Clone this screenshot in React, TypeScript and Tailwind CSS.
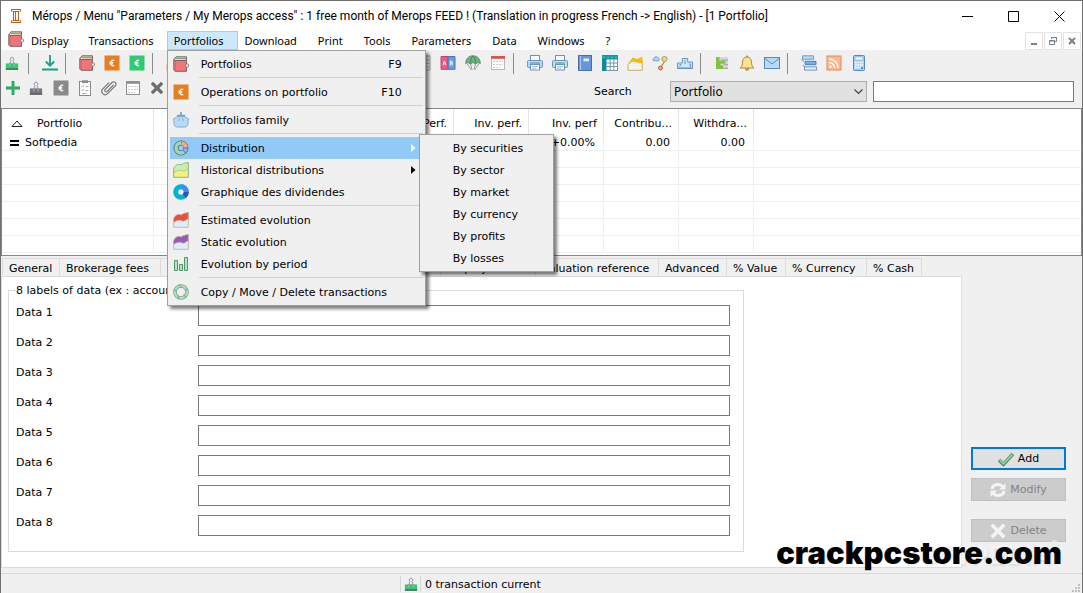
import type { ReactNode } from 'react';

type IconProps = { className?: string; children: ReactNode };

function Svg({ className = 'size-4', children }: IconProps) {
  return (
    <svg viewBox="0 0 16 16" className={`${className} shrink-0`} fill="none" aria-hidden="true">
      {children}
    </svg>
  );
}

/* ---------- icons ---------- */

function ColumnIcon() {
  return (
    <Svg>
      <path d="M3 1.500h10M3 14.500h10M4.500 3.500h7M4.500 12.500h7" stroke="#b5651d" />
      <path d="M3.500 1v2.500M12.500 1v2.500M3.500 12.500V15M12.500 12.500V15" stroke="#b5651d" />
      <path d="M5.500 4v8M7.500 4v8M10.500 4v8" stroke="#b5651d" />
    </Svg>
  );
}

function WalletIcon() {
  return (
    <Svg>
      <path d="M1 3.500 3 .8h10.500V4" fill="#d9cfa8" stroke="#6f6a66" />
      <path d="M3 2.500h10" stroke="#7fa887" />
      <path d="M.8 3.500 2 4.500h11.500v10.800H2L.8 14Z" fill="#f27478" stroke="#7d6365" />
      <path d="M2.500 5v10" stroke="#e0666b" />
      <rect x="12.500" y="8" width="3" height="3" rx="1" fill="#e9edf0" stroke="#74777a" strokeWidth=".8" />
    </Svg>
  );
}

function EuroIcon({ color }: { color: string }) {
  return (
    <Svg>
      <rect x=".5" y=".5" width="15" height="15" fill={color} />
      <path d="M10.300 5.500C8.400 4.500 6.800 5.500 6.800 8s1.600 3.500 3.500 2.500M5.500 7.300h3.700M5.500 8.800h3.700" stroke="#fff" strokeWidth="1.200" />
    </Svg>
  );
}

function ClipIcon({ color }: { color: string }) {
  return (
    <Svg className="size-3.5">
      <path d="M1 8.500h14V15H1Z" fill={color} />
      <path d="M1 15h14" stroke="#4f5a55" strokeWidth="1.600" />
      <path d="M5.500 9 6.800 5a2 2 0 1 1 2.400 0L10.500 9" fill="#f0f0f0" stroke="#8f94a8" strokeWidth="1.100" />
      <path d="M4.500 8.500h7" stroke="#8f94a8" />
      <path d="M5.500 9v3M10.500 9v3" stroke="#b9bdc9" />
    </Svg>
  );
}

function DownloadIcon() {
  return (
    <Svg>
      <path d="M8 0v10M3.800 6.500 8 10.700l4.200-4.200" stroke="#16a085" strokeWidth="1.800" />
      <path d="M0 14.500h16" stroke="#16a085" strokeWidth="2" />
    </Svg>
  );
}

function PlusIcon() {
  return (
    <Svg>
      <path d="M8 1v14M1 8h14" stroke="#1f9d55" strokeWidth="2.800" />
      <path d="M8 2v12M2 8h12" stroke="#38c172" strokeWidth="1" />
    </Svg>
  );
}

function ClipboardIcon() {
  return (
    <Svg>
      <rect x="2.500" y="1.500" width="11" height="14" fill="#fff" stroke="#8a8a8a" />
      <rect x="5" y=".3" width="6" height="2.800" fill="#8a8a8a" />
      <path d="m4.500 6 1 1 1.500-2M4.500 10l1 1 1.500-2M8.500 6.500h3M8.500 10.500h3M5 13.500h4" stroke="#999" strokeWidth=".8" />
    </Svg>
  );
}

function PaperclipIcon() {
  return (
    <Svg>
      <path
        d="m12.500 5-6.300 6.300a1.400 1.400 0 0 1-2-2L11 2.500a2.300 2.300 0 0 1 3.300 3.300l-7.800 7.800a3.300 3.300 0 0 1-4.700-4.700L8 2.700"
        stroke="#777"
        strokeWidth="1.200"
      />
    </Svg>
  );
}

function SheetIcon({ head, frame }: { head: string; frame: string }) {
  return (
    <Svg>
      <rect x="1.500" y="1.500" width="13" height="13" fill="#fff" stroke={frame} />
      <rect x="1" y="1" width="14" height="2.800" fill={head} />
      <path d="M3 6.500h10M3 9.500h10M3 12.500h7" stroke="#ccc" strokeDasharray="2 1" />
    </Svg>
  );
}

function CrossIcon({ color }: { color: string }) {
  return (
    <Svg>
      <path d="m4 4 8 8M12 4l-8 8" stroke={color} strokeWidth="3.200" strokeLinecap="square" />
    </Svg>
  );
}

function GridIcon() {
  return (
    <Svg>
      <rect x="1" y="1" width="14" height="14" fill="#eee" stroke="#aaa" />
      <path d="M1 5h14M1 8.500h14M1 12h14M5.500 1v14M10.500 1v14" stroke="#b5b5b5" />
    </Svg>
  );
}

function AbIcon() {
  return (
    <Svg>
      <path d="M1 1.500h7v12.800H1Z" fill="#ef5a84" stroke="#b54a6c" />
      <path d="M8 1.500h7v12.800H8Z" fill="#6d9be0" stroke="#4b74b4" />
      <path d="m3 10 1.500-4L6 10M3.500 8.800h2M10.200 6v4h1.500a1 1 0 0 0 0-2h-1.500 1.200a1 1 0 0 0 0-2Z" stroke="#fff" strokeWidth=".8" />
    </Svg>
  );
}

function ParachuteIcon() {
  return (
    <Svg>
      <path d="M2 8.500 6.500 15M5.500 8.500 7 15M10.500 8.500 9 15M14 8.500 9.500 15" stroke="#999" strokeWidth=".9" />
      <path d="M.7 8.500C.7 3.500 4 .7 8 .7s7.300 2.800 7.300 7.800L13 7.500 10.500 9 8 7.500 5.500 9 3 7.500Z" fill="#6bb383" stroke="#4d8b63" strokeWidth=".8" />
      <path d="M5.500 8.500C5.500 5 6.500 2 8 1c1.500 1 2.500 4 2.500 7.500" stroke="#467c58" strokeWidth=".8" />
    </Svg>
  );
}

function PrinterIcon({ tray }: { tray: string }) {
  return (
    <Svg>
      <rect x="3.500" y=".5" width="9" height="6" fill="#f4faff" stroke="#6c93bd" />
      <rect x=".5" y="5.500" width="15" height="7" rx="1" fill={tray} stroke="#6c93bd" />
      <path d="M3 8h10" stroke="#5d84ad" />
      <rect x="3.500" y="9.500" width="9" height="5.500" fill="#fff" stroke="#6c93bd" />
      <path d="M5 11.500h6M5 13.200h4" stroke="#8cb4dc" strokeWidth=".8" />
    </Svg>
  );
}

function BookIcon() {
  return (
    <Svg>
      <rect x="1.500" y=".5" width="13" height="15" fill="#6496dc" stroke="#4a6fa8" />
      <path d="M3.500 1v14" stroke="#a9c8ef" />
      <rect x="6.500" y="3.500" width="5.500" height="2.800" fill="#e3effd" />
    </Svg>
  );
}

function TealTableIcon() {
  return (
    <Svg>
      <rect x=".5" y=".5" width="15" height="15" fill="#fff" />
      <path d="M0 0h16v4.500H0Z" fill="#0b9aa3" />
      <path d="M0 4h4.500v12H0Z" fill="#0f8a9b" />
      <path d="M4 8h12M4 11.500h12M8.200 4v12M11.800 4v12M4 15.500h12M15.500 4v12" stroke="#7896a8" />
      <path d="M1 2.200h14" stroke="#4fd0d4" strokeDasharray="2 2" />
    </Svg>
  );
}

function AreaIcon({ top, bottom, line }: { top: string; bottom: string; line: string }) {
  return (
    <Svg>
      <path d="M.7 15.300V6.500C2 4 4 2 6 2.500c2.500.8 3 .2 4.500-1l4.800-1v14.800Z" fill={bottom} stroke={line} strokeWidth="1" />
      <path d="M.7 10.500v-4C2 4 4 2 6 2.500c2.500.8 3 .2 4.500-1l4.800-1V7C13 7 12 10 9.500 9 6 7.500 4 8.500.7 10.500Z" fill={top} stroke={line} strokeWidth=".6" />
    </Svg>
  );
}

function YieldIcon() {
  return (
    <Svg>
      <path d="M1 15.300V9.500L5 6h10.300v9.300Z" fill="#edf4fa" stroke="#d9a860" />
      <path d="M.5 9.500 5.500 2.500 10 4l5.500-2.500v7L10 7.500 5 6.500Z" fill="#f7bb0c" />
    </Svg>
  );
}

function NodesIcon() {
  return (
    <Svg>
      <path d="M12.500 6.500 9 12" stroke="#b08a5a" strokeWidth="1.300" />
      <path d="M1.500 5.700a1.600 1.600 0 0 1 .6-2.600 2.300 2.300 0 0 1 4.300.3 1.200 1.200 0 0 1 .3 2.300Z" fill="#b5dbfa" stroke="#6a9cc5" />
      <circle cx="12.500" cy="4" r="2.600" fill="#efd58c" stroke="#b99b57" />
      <circle cx="8.500" cy="13" r="2" fill="#f0a283" stroke="#b5674a" />
    </Svg>
  );
}

function PodiumIcon() {
  return (
    <Svg>
      <path d="M.5 13.500V8h4.800V3.500h5.400V7h4.800v6.500Z" fill="#cfe6fa" stroke="#6795c0" />
      <path d="M8 5v4M2.500 9.500h1.500l-1.500 2M12 9h1.500v3M1 13h14" stroke="#6795c0" />
    </Svg>
  );
}

function GanttIcon() {
  return (
    <Svg>
      <path d="M2 2h12v12H2Z" fill="#d5d8d8" />
      <path d="M7 4.500h7v1.200H7ZM10 9h4v1.200h-4ZM8 12.800h6V14H8Z" fill="#a4aaaa" />
      <path d="M2 2h3.500v3.500h6v3.200H6.500v1.500h2.500V14H2Z" fill="#84c341" />
    </Svg>
  );
}

function BellIcon() {
  return (
    <Svg>
      <circle cx="8" cy="13.800" r="1.600" fill="#e3b04b" stroke="#a88236" strokeWidth=".8" />
      <path d="M1 13c2-1.500 2.300-3 2.500-6C3.700 4 5 2.300 8 1.800c3 .5 4.300 2.200 4.500 5.200.2 3 .5 4.500 2.500 6Z" fill="#fbe38e" stroke="#b08a3c" />
      <circle cx="8" cy="1.300" r=".9" fill="#b08a3c" />
    </Svg>
  );
}

function MailIcon() {
  return (
    <Svg>
      <rect x=".5" y="2.500" width="15" height="11" fill="#b5dbfa" stroke="#5f88b3" />
      <path d="m1 3.500 7 5.500 7-5.500" stroke="#5f88b3" />
    </Svg>
  );
}

function ListIcon() {
  return (
    <Svg>
      <path d="M1.500.8h11v3.400h-11Z" fill="#b9dcf8" stroke="#5d86ac" strokeWidth=".8" />
      <path d="M4 6.300h11v3.400H4Z" fill="#6eb0f2" stroke="#3f6fa5" strokeWidth=".8" />
      <path d="M3.500 11.800h12v3.400h-12Z" fill="#d6ecfc" stroke="#5d86ac" strokeWidth=".8" />
      <path d="M.5 4.500 3 6.500M2 10l1.500 2" stroke="#5d86ac" />
    </Svg>
  );
}

function FeedIcon() {
  return (
    <Svg>
      <rect x="1" y="1" width="14" height="14" fill="#fbb98d" stroke="#dd8e62" />
      <circle cx="4.500" cy="11.800" r="1.300" fill="#fff" />
      <path d="M3.200 7.500a5.300 5.300 0 0 1 5.300 5.300M3.200 4a8.800 8.800 0 0 1 8.800 8.800" stroke="#fff" strokeWidth="1.400" />
    </Svg>
  );
}

function CalculatorIcon() {
  return (
    <Svg>
      <rect x="2.500" y=".5" width="11" height="15" rx="1" fill="#a8d2fa" stroke="#5688bd" />
      <rect x="4" y="2" width="8" height="3" fill="#f3faff" stroke="#78a5d0" strokeWidth=".6" />
      <path d="M4 7.500h8M4 10h8M4 12.500h8" stroke="#fff" strokeWidth="1.400" strokeDasharray="1.600 .8" />
      <path d="M11 12v2" stroke="#2f74c0" strokeWidth="1.500" />
    </Svg>
  );
}

function PurseIcon() {
  return (
    <Svg>
      <path d="M8 0v3M4 3.500h8" stroke="#7d9dba" strokeWidth="1.600" />
      <path d="M4 4.500h8c0 1.500 3 1 3.500 2.500.3 1.500-1 1.500-.5 3 .5 2-.8 5-2.500 5h-9C1.800 15 .5 12 1 10c.5-1.500-.8-1.500-.5-3C1 5.500 4 6 4 4.500Z" fill="#b5dbfa" stroke="#7aa2c6" strokeWidth=".9" />
      <path d="M6.500 6 5.500 9M9.500 6l1 3" stroke="#7aa2c6" strokeWidth=".8" />
    </Svg>
  );
}

function DonutIcon() {
  return (
    <Svg>
      <circle cx="8" cy="8" r="5" stroke="#4e7d62" strokeWidth="5" />
      <circle cx="8" cy="8" r="5" stroke="#a3d6b4" strokeWidth="3.400" />
      <path d="M8 3a5 5 0 0 1 5 5" stroke="#c47a55" strokeWidth="5" />
      <path d="M8.800 3.100A5 5 0 0 1 12.900 7.200" stroke="#f5a985" strokeWidth="3.400" />
      <path d="M13 8a5 5 0 0 1-2 4" stroke="#5f86c8" strokeWidth="4.600" />
      <path d="M12.900 8.800a5 5 0 0 1-1.300 2.500" stroke="#8fb5ee" strokeWidth="3" />
    </Svg>
  );
}

function DividendIcon() {
  return (
    <Svg>
      <circle cx="8" cy="8" r="5.300" stroke="#00b5d0" strokeWidth="5" />
      <path d="M8 2.700A5.300 5.300 0 0 1 13.300 8" stroke="#3f8cff" strokeWidth="5" />
      <path d="M13.300 8a5.300 5.300 0 0 1-2 4" stroke="#3a4db5" strokeWidth="5" />
    </Svg>
  );
}

function BarsIcon() {
  return (
    <Svg>
      <path d="M1.500 4.500h3v10h-3ZM6.500 8.500h3v6h-3ZM11.500 1.500h3v13h-3Z" fill="#b8e0c4" stroke="#4c9a68" />
    </Svg>
  );
}

function RingIcon() {
  return (
    <Svg>
      <circle cx="8" cy="8" r="6" stroke="#6fa583" strokeWidth="3.600" />
      <circle cx="8" cy="8" r="6" stroke="#b5dcc1" strokeWidth="2.200" />
      <path d="m1 6 3 1M6 .8l2.500 2.500M14 4.500 12.500 7M13 13l-2.500-2M5 15l.5-3" stroke="#6fa583" />
    </Svg>
  );
}

function CheckIcon() {
  return (
    <Svg>
      <path d="m1 9 4.500 4.300L15 3" stroke="#4b8a62" strokeWidth="3.600" />
      <path d="m1.500 9 4 3.700L14.500 3.500" stroke="#8fcba4" strokeWidth="2" />
    </Svg>
  );
}

function RefreshIcon() {
  return (
    <Svg>
      <path d="M2 7C2.500 4 5 2.500 8 2.500c2 0 3.500.8 4.500 2M14 9c-.5 3-3 4.500-6 4.500-2 0-3.500-.8-4.500-2" stroke="#f4f4f4" strokeWidth="3" />
      <path d="M15.500 1v6.500H9ZM.5 15V8.500H7Z" fill="#f4f4f4" />
    </Svg>
  );
}

function DeleteIcon() {
  return (
    <Svg>
      <path d="m3 3 10 10M13 3 3 13" stroke="#f4f4f4" strokeWidth="3.600" strokeLinecap="square" />
    </Svg>
  );
}

/* ---------- window frame ---------- */

function TitleBar() {
  return (
    <header className="flex h-[30px] items-center bg-white pl-[7px]">
      <ColumnIcon />
      <h1 className="ml-2 font-['Roboto','Noto_Sans',sans-serif] text-[12px] whitespace-nowrap">
        Mérops / Menu "Parameters / My Merops access" : 1 free month of Merops FEED ! (Translation in progress French -&gt; English) - [1 Portfolio]
      </h1>
      <div className="ml-auto flex h-full">
        <button aria-label="Minimize" className="flex w-[46px] items-center justify-center">
          <svg width="11" height="11" className="block"><path d="M0 5.500h11" stroke="#000" /></svg>
        </button>
        <button aria-label="Maximize" className="flex w-[46px] items-center justify-center">
          <svg width="11" height="11" className="block"><path d="M.5.5h10v10H.5Z" fill="none" stroke="#000" /></svg>
        </button>
        <button aria-label="Close" className="flex w-[46px] items-center justify-center">
          <svg width="11" height="11" className="block"><path d="m.5.5 10 10M10.500.5l-10 10" stroke="#000" /></svg>
        </button>
      </div>
    </header>
  );
}

const leftMenus = ['Display', 'Transactions'];
const rightMenus = ['Download', 'Print', 'Tools', 'Parameters', 'Data', 'Windows', '?'];

function MenuBar() {
  return (
    <nav className="flex h-[19px] bg-white pr-px pl-[7px] font-['Noto_Sans','Open_Sans',sans-serif] text-[11px]">
      <WalletIcon />
      {leftMenus.map((name) => (
        <button key={name} className="h-[19px] pr-[13px] pl-[7px] leading-[19px]">{name}</button>
      ))}
      <div className="relative">
        <button className="h-[19px] border border-[#99d1ff] bg-[#cce8ff] pr-[13px] pl-[6px] leading-[17px]">Portfolios</button>
        <PortfoliosMenu />
      </div>
      {rightMenus.map((name) => (
        <button key={name} className="h-[19px] pr-[14px] pl-[7px] leading-[19px]">{name}</button>
      ))}
      <div className="ml-auto flex gap-px pt-px">
        <button aria-label="Minimize child" className="flex h-[18px] w-[18px] items-center justify-center border border-[#e3e3e3]">
          <svg width="10" height="10"><path d="M2 8h6" stroke="#76838f" strokeWidth="2" /></svg>
        </button>
        <button aria-label="Restore child" className="flex h-[18px] w-[18px] items-center justify-center border border-[#e3e3e3]">
          <svg width="10" height="10" fill="none" stroke="#76838f">
            <path d="M3.500 3V1.500h5v4H7M3 1.500h6M1.500 4.500h5v4h-5ZM1 5h6" />
          </svg>
        </button>
        <button aria-label="Close child" className="flex h-[18px] w-[18px] items-center justify-center border border-[#e3e3e3]">
          <svg width="10" height="10"><path d="m2 2 6 6M8 2 2 8" stroke="#76838f" strokeWidth="2" /></svg>
        </button>
      </div>
    </nav>
  );
}

/* ---------- drop-down menu ---------- */

type Entry = { label: string; icon: ReactNode; shortcut?: string; sub?: boolean; active?: boolean };

const groups: Entry[][] = [
  [{ label: 'Portfolios', icon: <WalletIcon />, shortcut: 'F9' }],
  [{ label: 'Operations on portfolio', icon: <EuroIcon color="#e67e22" />, shortcut: 'F10' }],
  [{ label: 'Portfolios family', icon: <PurseIcon /> }],
  [
    { label: 'Distribution', icon: <DonutIcon />, sub: true, active: true },
    { label: 'Historical distributions', icon: <AreaIcon top="#c9eeb0" bottom="#f4f07c" line="#8db586" />, sub: true },
    { label: 'Graphique des dividendes', icon: <DividendIcon /> },
  ],
  [
    { label: 'Estimated evolution', icon: <AreaIcon top="#e8503a" bottom="#dceefa" line="#c9b9a4" /> },
    { label: 'Static evolution', icon: <AreaIcon top="#9b59b6" bottom="#dceefa" line="#c9b9a4" /> },
    { label: 'Evolution by period', icon: <BarsIcon /> },
  ],
  [{ label: 'Copy / Move / Delete transactions', icon: <RingIcon /> }],
];

const distributions = ['By securities', 'By sector', 'By market', 'By currency', 'By profits', 'By losses'];

function PortfoliosMenu() {
  return (
    <div className="absolute top-[19px] left-0 z-10 w-[259px] border border-[#a0a0a0] bg-[#f0f0f0] p-[2px] font-['DejaVu_Sans',Verdana,sans-serif] text-[11px] shadow-[3px_3px_3px_rgba(0,0,0,0.5)]">
      {groups.map((group, i) => (
        <div key={i}>
          {i > 0 && <div className="ml-[29px] h-[6px] pt-[2px]"><div className="h-px bg-[#d0d0d0]" /></div>}
          {group.map((entry) => (
            <button
              key={entry.label}
              className={`flex h-[22px] w-full items-center pl-[3px] text-left ${entry.active ? 'bg-[#91c9f7]' : ''}`}
            >
              {entry.icon}
              <span className="ml-3 pt-[2px] whitespace-nowrap">{entry.label}</span>
              {entry.shortcut && <span className="mr-[21px] ml-auto pt-[2px]">{entry.shortcut}</span>}
              {entry.sub && (
                <svg width="5" height="8" className="mr-[7px] ml-auto">
                  <path d="M0 0 4.500 4 0 8Z" fill={entry.active ? '#fff' : '#000'} />
                </svg>
              )}
            </button>
          ))}
        </div>
      ))}
      <div className="absolute top-[83px] left-[251px] w-[135px] border border-[#a0a0a0] bg-[#f0f0f0] p-[2px] shadow-[3px_3px_3px_rgba(0,0,0,0.5)]">
        {distributions.map((label) => (
          <button key={label} className="block h-[22px] w-full pt-[2px] pl-[31px] text-left">{label}</button>
        ))}
      </div>
    </div>
  );
}

/* ---------- toolbar ---------- */

function Tool({ name, children }: { name: string; children: ReactNode }) {
  return (
    <button aria-label={name} className="flex h-[25px] w-[25px] shrink-0 items-center pl-1">
      {children}
    </button>
  );
}

function Separator() {
  return <div className="h-[21px] w-3 shrink-0 pl-[2px]"><div className="h-full w-px bg-[#8a8a8a]" /></div>;
}

function Toolbar() {
  return (
    <div className="h-[58px]">
      <div className="flex h-[26px] items-center">
        <Tool name="Transaction"><ClipIcon color="#2ecc71" /></Tool>
        <Separator />
        <Tool name="Download"><DownloadIcon /></Tool>
        <Separator />
        <Tool name="Portfolios"><WalletIcon /></Tool>
        <Tool name="Operations"><EuroIcon color="#e67e22" /></Tool>
        <Tool name="Cash"><EuroIcon color="#2ecc71" /></Tool>
        <Separator />
        <Tool name="Securities"><YieldIcon /></Tool>
        <div className="w-[224px] shrink-0" />
        <Tool name="Grid"><GridIcon /></Tool>
        <Tool name="Compare"><AbIcon /></Tool>
        <Tool name="Parachute"><ParachuteIcon /></Tool>
        <Tool name="Calendar"><SheetIcon head="#d9534f" frame="#b9b9b9" /></Tool>
        <Separator />
        <Tool name="Print"><PrinterIcon tray="#b5d8fa" /></Tool>
        <Tool name="Print list"><PrinterIcon tray="#bfe8cb" /></Tool>
        <Tool name="Book"><BookIcon /></Tool>
        <Tool name="Table"><TealTableIcon /></Tool>
        <Tool name="Chart"><YieldIcon /></Tool>
        <Tool name="Links"><NodesIcon /></Tool>
        <Tool name="Ranking"><PodiumIcon /></Tool>
        <Separator />
        <Tool name="Planning"><GanttIcon /></Tool>
        <Tool name="Alerts"><BellIcon /></Tool>
        <Tool name="Mail"><MailIcon /></Tool>
        <Separator />
        <Tool name="List"><ListIcon /></Tool>
        <Tool name="Feed"><FeedIcon /></Tool>
        <Tool name="Calculator"><CalculatorIcon /></Tool>
      </div>
      <div className="flex items-start">
        <div className="flex h-6 [&>button]:h-6 [&>button]:w-6">
          <Tool name="New"><PlusIcon /></Tool>
          <Tool name="Clip"><ClipIcon color="#777" /></Tool>
          <Tool name="Euro"><EuroIcon color="#8a8a8a" /></Tool>
          <Tool name="Clipboard"><ClipboardIcon /></Tool>
          <Tool name="Attachment"><PaperclipIcon /></Tool>
          <Tool name="Window"><SheetIcon head="#8f8f8f" frame="#8f8f8f" /></Tool>
          <Tool name="Remove"><CrossIcon color="#6e6e6e" /></Tool>
        </div>
        <div className="mt-[5px] mr-2 ml-auto flex items-center">
          <label htmlFor="search-field" className="w-[76px] pt-px">Search</label>
          <div className="relative mr-[6px]">
            <select
              id="search-field"
              className="h-[21px] w-[197px] appearance-none border border-[#adadad] bg-[#e1e1e1] pl-[3px] font-['Noto_Sans',sans-serif] text-[12px] leading-[18px]"
            >
              <option>Portfolio</option>
            </select>
            <svg width="9" height="6" className="pointer-events-none absolute top-2 right-1">
              <path d="m.5.5 4 4 4-4" fill="none" stroke="#444" strokeWidth="1.200" />
            </svg>
          </div>
          <input aria-label="Search text" className="h-[21px] w-[201px] border border-[#7a7a7a] bg-white px-1" />
        </div>
      </div>
    </div>
  );
}

/* ---------- portfolio list ---------- */

function PortfolioTable() {
  return (
    <section className="border border-[#828790] bg-white pb-[2px]">
      <table className="w-full table-fixed border-separate border-spacing-0 text-right [&_td]:border-r [&_td]:border-b [&_td]:border-[#f0f0f0] [&_td]:p-0 [&_th]:border-r [&_th]:border-[#e5e5e5] [&_th]:p-0 [&_th]:pt-1 [&_th]:font-normal">
        <colgroup>
          <col className="w-[152px]" />
          <col className="w-[75px]" />
          <col className="w-[75px]" />
          <col className="w-[75px]" />
          <col className="w-[75px]" />
          <col className="w-[75px]" />
          <col className="w-[75px]" />
          <col className="w-[75px]" />
          <col className="w-[75px]" />
          <col />
        </colgroup>
        <thead>
          <tr className="h-[25px] leading-4">
            <th>
              <span className="flex items-center gap-[14px] pl-[9px]">
                <svg width="12" height="7"><path d="M1 6.500 6 1l5 5.500Z" fill="none" stroke="#222" /></svg>
                Portfolio
              </span>
            </th>
            <th /><th /><th />
            <th><span className="pr-[6px]">Perf.</span></th>
            <th><span className="pr-[6px]">Inv. perf.</span></th>
            <th><span className="pr-[6px]">Inv. perf</span></th>
            <th><span className="pr-[6px]">Contribu...</span></th>
            <th><span className="pr-[6px]">Withdra...</span></th>
            <th className="border-r-0!" />
          </tr>
        </thead>
        <tbody>
          <tr className="h-[17px] leading-[14px] [&>td]:pt-[2px]!">
            <td>
              <span className="flex items-center gap-[6px] pl-2">
                <svg width="9" height="6"><path d="M0 1h9M0 5h9" stroke="#000" strokeWidth="2" /></svg>
                Softpedia
              </span>
            </td>
            <td /><td /><td /><td /><td />
            <td><span className="pr-2">+0.00%</span></td>
            <td><span className="pr-2">0.00</span></td>
            <td><span className="pr-2">0.00</span></td>
            <td className="border-r-0!" />
          </tr>
          {[1, 2, 3, 4, 5, 6].map((row) => (
            <tr key={row} className="h-[17px]">
              <td /><td /><td /><td /><td /><td /><td /><td /><td />
              <td className="border-r-0!" />
            </tr>
          ))}
        </tbody>
      </table>
    </section>
  );
}

/* ---------- detail form ---------- */

const tabClass = 'h-[18px] shrink-0 border-t border-l border-[#dcdcdc] pt-[2px] pl-[6px] text-left leading-4 whitespace-nowrap';

function Tabs() {
  return (
    <div className="flex pl-px">
      <button className={`${tabClass} w-[57px]`}>General</button>
      <button className={`${tabClass} w-[101px]`}>Brokerage fees</button>
      <button aria-label="Cash account" className={`${tabClass} w-[280px]`}>
        <svg width="8" height="8"><circle cx="4" cy="4" r="3.500" fill="#f3cf4a" /></svg>
      </button>
      <button className={`${tabClass} w-[95px]`}>Display</button>
      <button className={`${tabClass} w-[123px]`}>Valuation reference</button>
      <button className={`${tabClass} w-[68px]`}>Advanced</button>
      <button className={`${tabClass} w-[59px]`}>% Value</button>
      <button className={`${tabClass} w-[81px]`}>% Currency</button>
      <button className={`${tabClass} w-[56px] border-r`}>% Cash</button>
    </div>
  );
}

const fields = ['Data 1', 'Data 2', 'Data 3', 'Data 4', 'Data 5', 'Data 6', 'Data 7', 'Data 8'];

function DetailPanel() {
  return (
    <div className="flex-1 border border-[#dcdcdc] bg-white px-[6px] pt-[5px] pb-[15px]">
      <fieldset className="w-full max-w-[736px] border border-[#dcdcdc] px-[7px] pt-[7px] pb-[6px]">
        <legend className="h-4 leading-[18px]">8 labels of data (ex : account number)</legend>
        {fields.map((name) => (
          <div key={name} className="flex h-[30px] items-start pr-[6px]">
            <label htmlFor={name} className="w-[182px] leading-[15px]">{name}</label>
            <input id={name} className="h-[21px] flex-1 border border-[#7a7a7a] bg-white px-1" />
          </div>
        ))}
      </fieldset>
    </div>
  );
}

function Actions() {
  const disabled = 'flex h-[23px] items-center justify-center gap-1 border border-[#bfbfbf] bg-[#cccccc] text-[#838383]';
  return (
    <aside className="flex w-[120px] flex-col justify-end pr-[16px] pb-[26px] pl-[9px]">
      <button className="flex h-[23px] items-center justify-center gap-1 border-2 border-[#0078d7] bg-[#e1e1e1]">
        <CheckIcon />
        <span className="pt-[2px]">Add</span>
      </button>
      <button disabled className={`${disabled} mt-2`}>
        <RefreshIcon />
        <span className="pt-[2px]">Modify</span>
      </button>
      <button disabled className={`${disabled} mt-[18px]`}>
        <DeleteIcon />
        <span className="pt-[2px]">Delete</span>
      </button>
    </aside>
  );
}

function StatusBar() {
  return (
    <footer className="mt-[5px] flex h-[20px] items-center border-t border-[#d7d7d7] pl-[399px]">
      <div className="flex h-4 w-[21px] items-center justify-center border-x border-[#d7d7d7]">
        <ClipIcon color="#2ecc71" />
      </div>
      <span className="ml-1 pt-[3px] leading-4">0 transaction current</span>
      <svg width="10" height="10" className="mt-2 mr-px ml-auto" fill="#bfbfbf">
        <path d="M7 1h2v2H7ZM4 4h2v2H4ZM7 4h2v2H7ZM1 7h2v2H1ZM4 7h2v2H4ZM7 7h2v2H7Z" />
      </svg>
    </footer>
  );
}

export default function App() {
  return (
    <div className="relative flex min-h-screen flex-col border border-[#707070] bg-[#f0f0f0] font-['DejaVu_Sans',Verdana,sans-serif] text-[11px] text-black">
      <TitleBar />
      <MenuBar />
      <Toolbar />
      <PortfolioTable />
      <div className="mt-[2px] flex flex-1 flex-col">
        <Tabs />
        <div className="flex flex-1">
          <DetailPanel />
          <Actions />
        </div>
      </div>
      <StatusBar />
      <div className="pointer-events-none absolute right-6 bottom-5 flex font-['Liberation_Sans',sans-serif] text-[26px] leading-9 font-bold text-[#f4f4f4] [text-shadow:1px_2px_2px_rgba(0,0,0,0.08)]">
        SOFTPEDIA<span className="text-[10px] leading-4">®</span>
      </div>
      <div className="pointer-events-none absolute right-5 bottom-[22px] font-['Inter',sans-serif] text-[31px] leading-9 font-black">
        crackpcstore.com
      </div>
    </div>
  );
}
